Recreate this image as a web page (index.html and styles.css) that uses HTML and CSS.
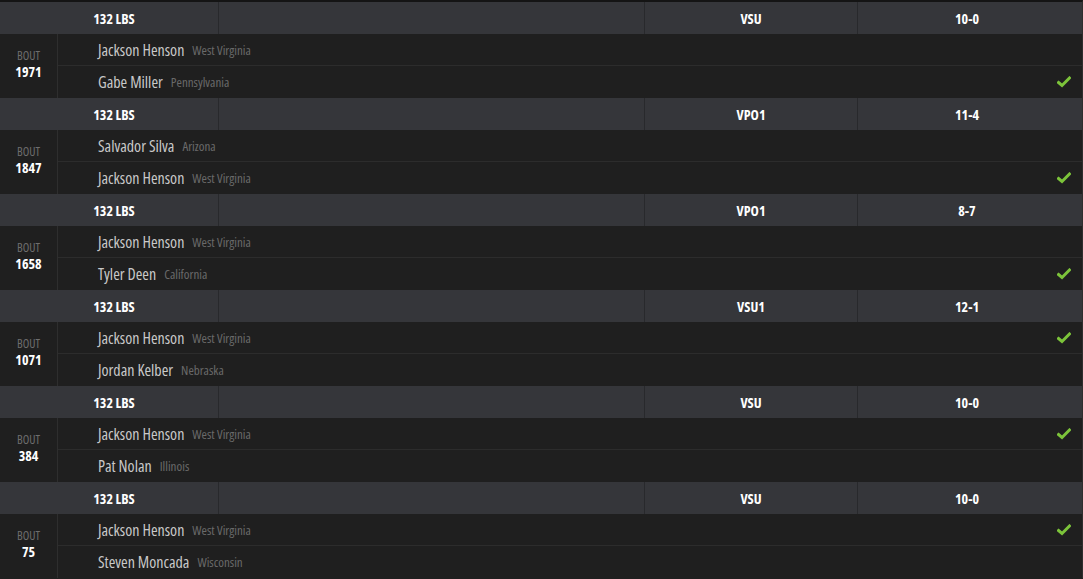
FILE: index.html
```html
<!DOCTYPE html>
<html>
<head>
<meta charset="utf-8">
<link rel="stylesheet" href="styles.css">
</head>
<body>
<div class="matches">
  <div class="match">
    <div class="head"><div class="hc weight">132 LBS</div><div class="hc"></div><div class="hc">VSU</div><div class="hc score">10-0</div></div>
    <div class="body">
      <div class="bout"><span class="bl">BOUT</span><span class="bn">1971</span></div>
      <div class="wrestlers">
        <div class="wr"><span class="nm">Jackson Henson</span><span class="st">West Virginia</span></div>
        <div class="wr"><span class="nm">Gabe Miller</span><span class="st">Pennsylvania</span><svg class="chk" viewBox="0 0 14 12"><path d="M1.5 6.5 L5 9.5 L12.5 2"/></svg></div>
      </div>
    </div>
  </div>
  <div class="match">
    <div class="head"><div class="hc weight">132 LBS</div><div class="hc"></div><div class="hc">VPO1</div><div class="hc score">11-4</div></div>
    <div class="body">
      <div class="bout"><span class="bl">BOUT</span><span class="bn">1847</span></div>
      <div class="wrestlers">
        <div class="wr"><span class="nm">Salvador Silva</span><span class="st">Arizona</span></div>
        <div class="wr"><span class="nm">Jackson Henson</span><span class="st">West Virginia</span><svg class="chk" viewBox="0 0 14 12"><path d="M1.5 6.5 L5 9.5 L12.5 2"/></svg></div>
      </div>
    </div>
  </div>
  <div class="match">
    <div class="head"><div class="hc weight">132 LBS</div><div class="hc"></div><div class="hc">VPO1</div><div class="hc score">8-7</div></div>
    <div class="body">
      <div class="bout"><span class="bl">BOUT</span><span class="bn">1658</span></div>
      <div class="wrestlers">
        <div class="wr"><span class="nm">Jackson Henson</span><span class="st">West Virginia</span></div>
        <div class="wr"><span class="nm">Tyler Deen</span><span class="st">California</span><svg class="chk" viewBox="0 0 14 12"><path d="M1.5 6.5 L5 9.5 L12.5 2"/></svg></div>
      </div>
    </div>
  </div>
  <div class="match">
    <div class="head"><div class="hc weight">132 LBS</div><div class="hc"></div><div class="hc">VSU1</div><div class="hc score">12-1</div></div>
    <div class="body">
      <div class="bout"><span class="bl">BOUT</span><span class="bn">1071</span></div>
      <div class="wrestlers">
        <div class="wr"><span class="nm">Jackson Henson</span><span class="st">West Virginia</span><svg class="chk" viewBox="0 0 14 12"><path d="M1.5 6.5 L5 9.5 L12.5 2"/></svg></div>
        <div class="wr"><span class="nm">Jordan Kelber</span><span class="st">Nebraska</span></div>
      </div>
    </div>
  </div>
  <div class="match">
    <div class="head"><div class="hc weight">132 LBS</div><div class="hc"></div><div class="hc">VSU</div><div class="hc score">10-0</div></div>
    <div class="body">
      <div class="bout"><span class="bl">BOUT</span><span class="bn">384</span></div>
      <div class="wrestlers">
        <div class="wr"><span class="nm">Jackson Henson</span><span class="st">West Virginia</span><svg class="chk" viewBox="0 0 14 12"><path d="M1.5 6.5 L5 9.5 L12.5 2"/></svg></div>
        <div class="wr"><span class="nm">Pat Nolan</span><span class="st">Illinois</span></div>
      </div>
    </div>
  </div>
  <div class="match">
    <div class="head"><div class="hc weight">132 LBS</div><div class="hc"></div><div class="hc">VSU</div><div class="hc score">10-0</div></div>
    <div class="body">
      <div class="bout"><span class="bl">BOUT</span><span class="bn">75</span></div>
      <div class="wrestlers">
        <div class="wr"><span class="nm">Jackson Henson</span><span class="st">West Virginia</span><svg class="chk" viewBox="0 0 14 12"><path d="M1.5 6.5 L5 9.5 L12.5 2"/></svg></div>
        <div class="wr"><span class="nm">Steven Moncada</span><span class="st">Wisconsin</span></div>
      </div>
    </div>
  </div>
</div>
</body>
</html>
```
FILE: styles.css
```css
html, body {
  margin: 0;
  padding: 0;
  background: #1f1f1f;
}
body {
  font-family: "Open Sans", "DejaVu Sans", sans-serif;
  font-stretch: 75%;
  overflow: hidden;
}
.matches {
  width: 1082px;
  border-top: 2px solid #141414;
  border-right: 1px solid #2e2e2e;
}
.head {
  display: grid;
  grid-template-columns: 219px 1fr 213px 224px;
  height: 32px;
  background: #35363a;
}
.hc {
  display: flex;
  align-items: center;
  justify-content: center;
  border-right: 1px solid #28292c;
  color: #ffffff;
  font-weight: bold;
  font-size: 14px;
}
.hc:last-child {
  border-right: none;
}
.hc.weight {
  padding-left: 10px;
}
.hc.score {
  padding-right: 6px;
}
.body {
  display: flex;
  height: 64px;
  background: #1f1f1f;
}
.bout {
  width: 58px;
  box-sizing: border-box;
  padding-bottom: 4px;
  border-right: 1px solid #2e2e2e;
  display: flex;
  flex-direction: column;
  align-items: center;
  justify-content: center;
  line-height: 16px;
}
.bl {
  color: #6e6e6e;
  font-size: 12px;
}
.bn {
  color: #ffffff;
  font-weight: bold;
  font-size: 14px;
}
.wrestlers {
  flex: 1;
  display: flex;
  flex-direction: column;
}
.wr {
  height: 32px;
  box-sizing: border-box;
  display: flex;
  align-items: center;
  padding-left: 40px;
  padding-right: 11px;
}
.wr:first-child {
  border-bottom: 1px solid #2c2c2c;
}
.nm {
  color: #c9c9c9;
  font-size: 16px;
}
.st {
  color: #6a6a6a;
  font-size: 13px;
  margin-left: 8px;
}
.chk {
  margin-left: auto;
  width: 14px;
  height: 12px;
}
.chk path {
  fill: none;
  stroke: #7cc43a;
  stroke-width: 3;
  stroke-linecap: square;
}
```
